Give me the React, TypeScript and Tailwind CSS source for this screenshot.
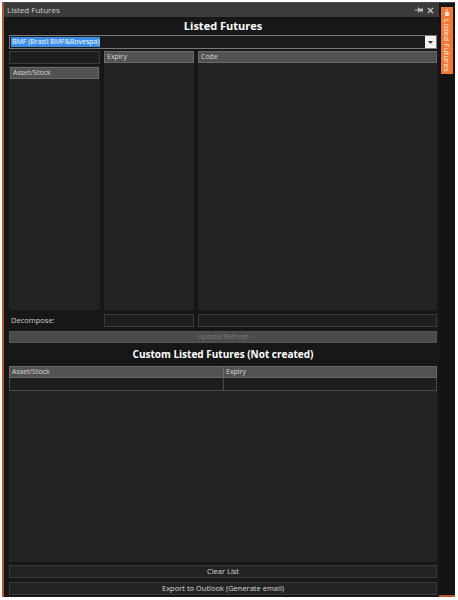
import React from "react";

const font = { fontFamily: '"Open Sans", "Liberation Sans", sans-serif' };

const Header = ({ label, className = "" }: { label: string; className?: string }) => (
  <div
    className={`h-[12px] bg-[#525252] border border-[#6a6a6a] text-[7px] leading-[10px] text-[#d8d8d8] px-[2px] ${className}`}
  >
    {label}
  </div>
);

const App = () => {
  return (
    <div className="w-[458px] h-[600px] bg-white pt-[2px] pl-[2px]" style={font}>
      <div className="flex w-[453px] h-[595px] border-l-[2px] border-[#b8582a] border-t border-t-[#4a4a4a]">
        {/* main panel */}
        <div className="flex flex-col w-[435px] bg-[#171717]">
          <div className="flex items-center h-[14px] bg-[#3b3b3b] px-[3px]">
            <span className="text-[8px] text-[#cfcfcf]">Listed Futures</span>
            <div className="ml-auto flex items-center gap-[4px] pr-[2px]">
              <svg width="8" height="6" viewBox="0 0 8 6">
                <rect x="0" y="2.5" width="3" height="1" fill="#bbb" />
                <rect x="3" y="0.5" width="1" height="5" fill="#bbb" />
                <rect x="4" y="1.5" width="4" height="3" fill="#bbb" />
              </svg>
              <svg width="7" height="7" viewBox="0 0 7 7">
                <path d="M1 1 L6 6 M6 1 L1 6" stroke="#c8c8c8" strokeWidth="1.3" />
              </svg>
            </div>
          </div>

          <div className="flex flex-col flex-1 pl-[5px] pr-[2px]">
            <div className="h-[18px] flex items-center justify-center text-[11px] font-bold text-white">
              Listed Futures
            </div>

            {/* dropdown */}
            <div className="flex h-[14px] border border-[#7a7a7a] bg-[#1c1c1c]">
              <div className="flex-1 flex items-center px-[1px]">
                <span className="bg-[#3a8ee8] text-white text-[7px] leading-[10px] px-[1px]">
                  BMF (Brazil BMF&amp;Bovespa)
                </span>
              </div>
              <div className="w-[11px] bg-[#f2f2f2] flex items-center justify-center">
                <svg width="5" height="3" viewBox="0 0 5 3">
                  <path d="M0 0 L5 0 L2.5 3 Z" fill="#333" />
                </svg>
              </div>
            </div>

            {/* columns */}
            <div className="flex gap-[4px] mt-[2px] h-[259px]">
              <div className="flex flex-col w-[91px]">
                <div className="h-[13px] bg-[#1e1e1e] border border-[#3c3c3c]" />
                <div className="flex-1 mt-[2px] bg-[#232323] p-[1px]">
                  <Header label="Asset/Stock" />
                </div>
              </div>
              <div className="flex flex-col w-[90px] bg-[#232323]">
                <Header label="Expiry" />
              </div>
              <div className="flex flex-col flex-1 bg-[#232323]">
                <Header label="Code" />
              </div>
            </div>

            {/* decompose */}
            <div className="flex gap-[4px] mt-[4px] h-[13px]">
              <div className="w-[91px] text-[7.5px] leading-[13px] text-[#d0d0d0] pl-[2px]">Decompose:</div>
              <div className="w-[90px] bg-[#1e1e1e] border border-[#3c3c3c]" />
              <div className="flex-1 bg-[#1e1e1e] border border-[#3c3c3c]" />
            </div>

            <div className="mt-[4px] h-[12px] bg-[#4a4a4a] border border-[#555] text-center text-[7px] leading-[10px] text-[#7c7c7c]">
              Update/Refresh
            </div>

            <div className="h-[23px] flex items-center justify-center text-[10px] font-bold text-white">
              Custom Listed Futures (Not created)
            </div>

            {/* table */}
            <div className="flex flex-col h-[196px] bg-[#232323]">
              <div className="flex border border-[#6a6a6a] bg-[#525252] h-[12px]">
                <div className="w-[214px] border-r border-[#6a6a6a] text-[7px] leading-[10px] text-[#d8d8d8] px-[2px]">
                  Asset/Stock
                </div>
                <div className="flex-1 text-[7px] leading-[10px] text-[#d8d8d8] px-[2px]">Expiry</div>
              </div>
              <div className="flex h-[13px] border border-t-0 border-[#4a4a4a] bg-[#1e1e1e]">
                <div className="w-[214px] border-r border-[#4a4a4a]" />
                <div className="flex-1" />
              </div>
            </div>

            <div className="mt-[3px] h-[13px] bg-[#232323] border border-[#3a3a3a] text-center text-[7.5px] leading-[11px] text-[#d8d8d8]">
              Clear List
            </div>
            <div className="mt-[4px] h-[13px] bg-[#232323] border border-[#3a3a3a] text-center text-[7.5px] leading-[11px] text-[#d8d8d8]">
              Export to Outlook (Generate email)
            </div>
          </div>
        </div>

        {/* right dock strip */}
        <div className="w-[16px] bg-[#141414] pt-[4px] pl-[2px] border-b-[2px] border-[#b8582a]">
          <div className="w-[12px] h-[67px] bg-[#f07a35] flex flex-col items-center pt-[2px]">
            <svg width="6" height="7" viewBox="0 0 6 7">
              <rect x="2.5" y="0" width="1" height="3" fill="#fde2d0" />
              <rect x="0.5" y="3" width="5" height="1" fill="#fde2d0" />
              <rect x="1" y="4" width="4" height="3" fill="#fde2d0" />
            </svg>
            <span
              className="mt-[3px] text-[8px] leading-[12px] text-[#fff1e8]"
              style={{ writingMode: "vertical-rl" }}
            >
              Listed Futures
            </span>
          </div>
        </div>
      </div>
    </div>
  );
};

export default App;
